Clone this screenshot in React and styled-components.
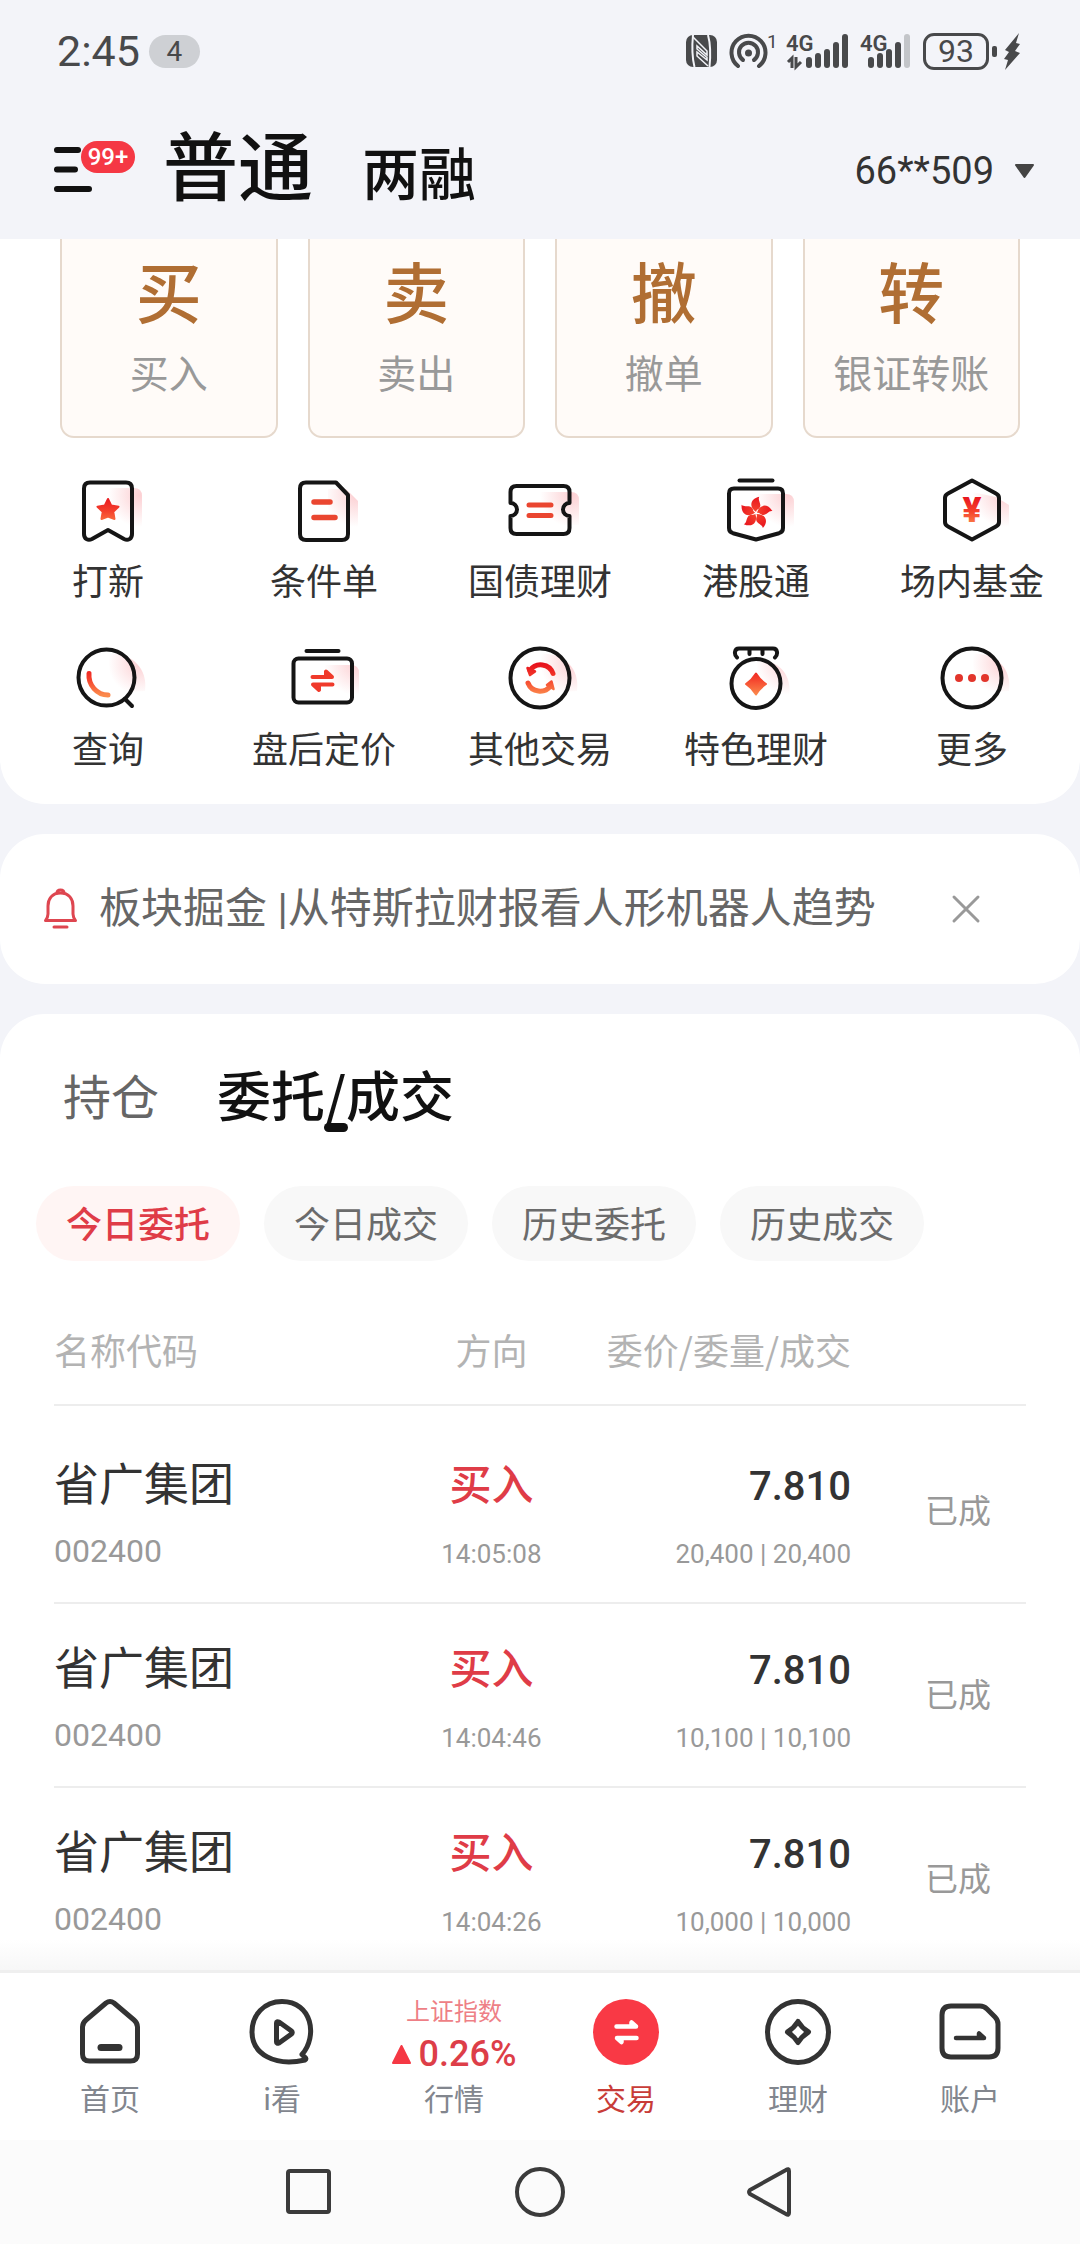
import React, { useState } from 'react';
import styled, { createGlobalStyle } from 'styled-components';

const GlobalStyle = createGlobalStyle`
  *,
  *::before,
  *::after {
    box-sizing: border-box;
  }

  body {
    margin: 0;
    background: #f3f4f9;
    color: #333333;
    font-family: 'Noto Sans CJK SC', sans-serif;
  }

  button {
    margin: 0;
    padding: 0;
    border: 0;
    background: none;
    color: inherit;
    font: inherit;
    cursor: pointer;
  }

  a {
    color: inherit;
    text-decoration: none;
  }

  svg {
    display: block;
    flex: none;
    overflow: visible;
  }
`;

const numeric = "Roboto, 'Noto Sans CJK SC', sans-serif";

const Page = styled.div`
  min-height: 100vh;
  display: flex;
  flex-direction: column;
`;

/* ---------- Top ---------- */

const Top = styled.header`
  position: sticky;
  top: 0;
  z-index: 2;
  background: #f3f4f9;
`;

const StatusBar = styled.div`
  display: flex;
  align-items: center;
  padding: 27px 60px 0 57px;
  color: #48494b;
  font-family: ${numeric};
`;

const Clock = styled.span`
  font-size: 43px;
  line-height: 48px;
`;

const Count = styled.span`
  width: 51px;
  margin-left: 9px;
  border-radius: 17px;
  background: #ced0d4;
  font-size: 28px;
  line-height: 33px;
  text-align: center;
`;

const StatusIcons = styled.div`
  display: flex;
  align-items: center;
  gap: 12px;
  margin-left: auto;
`;

const Battery = styled.span`
  position: relative;
  width: 66px;
  margin-right: 3px;
  border: 3px solid #48494b;
  border-radius: 11px;
  font-size: 32px;
  line-height: 31px;
  text-align: center;

  &::after {
    content: '';
    position: absolute;
    top: 10px;
    right: -11px;
    width: 5px;
    height: 11px;
    border-radius: 2px;
    background: #48494b;
  }
`;

const TitleBar = styled.div`
  display: flex;
  align-items: center;
  padding: 24px 46px 0 54px;
  height: 164px;
`;

const MenuButton = styled.button`
  position: relative;
  width: 82px;
`;

const Badge = styled.span`
  position: absolute;
  top: -6px;
  left: 27px;
  width: 54px;
  border-radius: 16px;
  background: #f53844;
  color: #ffffff;
  font-family: ${numeric};
  font-size: 24px;
  font-weight: 500;
  line-height: 32px;
`;

const Accounts = styled.nav`
  display: flex;
  align-items: baseline;
  gap: 49px;
  margin-left: 27px;
  padding-bottom: 5px;
  color: #111111;
  font-weight: 500;
`;

const AccountTab = styled.button`
  font-size: ${props => (props.$active ? '75px' : '57px')};
  line-height: 108px;
`;

const AccountPicker = styled.button`
  display: flex;
  align-items: center;
  gap: 21px;
  margin-left: auto;
  padding-top: 4px;
  font-family: ${numeric};
  font-size: 38px;
  line-height: 48px;
`;

/* ---------- Panels ---------- */

const Main = styled.main`
  flex: 1;
  display: flex;
  flex-direction: column;
  gap: 30px;
`;

const Panel = styled.section`
  border-radius: 45px;
  background: #ffffff;
`;

const TradePanel = styled(Panel)`
  border-top-left-radius: 0;
  border-top-right-radius: 0;
  padding-bottom: 30px;
`;

const ActionGrid = styled.div`
  display: grid;
  grid-template-columns: repeat(4, 1fr);
  gap: 30px;
  padding: 0 60px;
`;

const Action = styled.button`
  display: flex;
  flex-direction: column;
  align-items: center;
  padding: 10px 0 36px;
  border: 2px solid #e6d9cd;
  border-top: 0;
  border-radius: 0 0 14px 14px;
  background: #fffbf8;
`;

const ActionGlyph = styled.span`
  color: #b06e33;
  font-size: 66px;
  font-weight: 500;
  line-height: 80px;
`;

const ActionLabel = styled.span`
  margin-top: 14px;
  color: #999999;
  font-size: 39px;
  line-height: 57px;
`;

const ShortcutGrid = styled.div`
  display: grid;
  grid-template-columns: repeat(5, 1fr);
  row-gap: 37px;
  margin-top: 37px;
`;

const Shortcut = styled.a`
  display: flex;
  flex-direction: column;
  align-items: center;
  gap: 5px;
  font-size: 36px;
  line-height: 54px;
  white-space: nowrap;
`;

const Notice = styled(Panel)`
  display: flex;
  align-items: center;
  padding: 45px 100px 45px 43px;
`;

const NoticeText = styled.a`
  flex: 1;
  margin-left: 20px;
  color: #666666;
  font-family: ${numeric};
  font-size: 42px;
  line-height: 60px;
`;

const OrderPanel = styled(Panel)`
  flex: 1;
  padding-top: 40px;
  border-bottom-left-radius: 0;
  border-bottom-right-radius: 0;
`;

const Tabs = styled.div`
  display: flex;
  gap: 58px;
  padding: 0 63px;
`;

const Tab = styled.button`
  position: relative;
  color: ${props => (props.$active ? '#111111' : '#666666')};
  font-size: ${props => (props.$active ? '54px' : '48px')};
  font-weight: ${props => (props.$active ? 500 : 400)};
  line-height: 80px;
`;

const Underline = styled.span`
  position: absolute;
  bottom: 2px;
  left: 50%;
  width: 24px;
  height: 9px;
  margin-left: -12px;
  border-radius: 5px;
  background: #111111;
`;

const Chips = styled.div`
  display: flex;
  gap: 24px;
  margin-top: 52px;
  padding: 0 36px;
`;

const Chip = styled.button`
  padding: 0 30px 2px;
  border-radius: 38px;
  background: ${props => (props.$active ? '#fff5f4' : '#f8f8f8')};
  color: ${props => (props.$active ? '#df3c47' : '#6b6b6b')};
  font-size: 36px;
  font-weight: ${props => (props.$active ? 500 : 400)};
  line-height: 73px;
`;

/* ---------- Orders ---------- */

const TableWrap = styled.div`
  padding: 0 54px;
`;

const Table = styled.table`
  width: 100%;
  table-layout: fixed;
  border-collapse: separate;
  border-spacing: 0;

  tbody::before {
    content: '';
    display: block;
    height: 14px;
  }

  tbody tr:last-child td {
    border-bottom: 0;
  }
`;

const HeadCell = styled.th`
  width: ${props => props.$width};
  padding: 61px 0 28px;
  border-bottom: 2px solid #ededed;
  color: #b3b3b3;
  font-size: 36px;
  font-weight: 400;
  line-height: 54px;
  text-align: ${props => props.$align || 'left'};
  white-space: nowrap;
`;

const Cell = styled.td`
  padding: 32px 0 12px;
  border-bottom: 2px solid #ededed;
  text-align: ${props => props.$align || 'left'};
  vertical-align: top;
  white-space: nowrap;
`;

const StatusCell = styled.td`
  padding: 0 35px 4px 0;
  border-bottom: 2px solid #ededed;
  color: #999999;
  font-size: 33px;
  text-align: right;
  vertical-align: middle;
`;

const StockName = styled.div`
  font-size: 45px;
  line-height: 60px;
`;

const StockCode = styled.div`
  color: #999999;
  font-family: ${numeric};
  font-size: 32px;
  line-height: 78px;
`;

const Side = styled.div`
  color: #df3c47;
  font-size: 42px;
  font-weight: 500;
  line-height: 60px;
  margin-bottom: 10px;
`;

const Price = styled.div`
  font-family: ${numeric};
  font-size: 40px;
  font-weight: 500;
  line-height: 70px;
`;

const Detail = styled.div`
  color: #999999;
  font-family: ${numeric};
  font-size: 26px;
  line-height: 64px;
`;

/* ---------- Bottom ---------- */

const Bottom = styled.footer`
  position: sticky;
  bottom: 0;
  z-index: 2;
`;

const TabBar = styled.nav`
  position: relative;
  display: grid;
  grid-template-columns: repeat(6, 1fr);
  padding: 23px 24px 20px;
  border-top: 3px solid #efefef;
  background: #ffffff;

  &::before {
    content: '';
    position: absolute;
    left: 0;
    right: 0;
    bottom: 100%;
    height: 30px;
    margin-bottom: 3px;
    background: linear-gradient(rgba(247, 247, 247, 0), rgba(247, 247, 247, 1));
  }
`;

const TabItem = styled.a`
  display: flex;
  flex-direction: column;
  align-items: center;
  color: ${props => (props.$active ? '#c83c38' : '#82868e')};
  font-size: 30px;
  line-height: 45px;
`;

const TabIcon = styled.span`
  height: 79px;
  padding-top: 2px;
`;

const IndexQuote = styled.span`
  display: flex;
  flex-direction: column;
  align-items: center;
  height: 79px;
  color: #ee7f86;
  font-size: 24px;
  line-height: 28px;
`;

const IndexChange = styled.span`
  display: flex;
  align-items: center;
  gap: 8px;
  margin-top: 8px;
  color: #dd3e48;
  font-family: ${numeric};
  font-size: 36px;
  font-weight: 500;
  line-height: 44px;
`;

const SystemBar = styled.div`
  display: flex;
  justify-content: center;
  gap: 171px;
  padding: 22px 0;
  background: #fbfbfb;
`;

const SystemButton = styled.button`
  width: 60px;
  height: 60px;
`;

/* ---------- Icons ---------- */

const IconGradients = () => (
  <svg width="0" height="0" style={{ position: 'absolute' }} aria-hidden="true">
    <defs>
      <linearGradient id="flame" gradientUnits="userSpaceOnUse" x1="0" y1="20" x2="0" y2="52">
        <stop offset="0" stopColor="#e60f1c" />
        <stop offset="0.5" stopColor="#f5402c" />
        <stop offset="1" stopColor="#fb8a4c" />
      </linearGradient>
      <radialGradient id="glow" gradientUnits="userSpaceOnUse" cx="68" cy="20" r="32">
        <stop offset="0" stopColor="#f9a0a6" stopOpacity="0.5" />
        <stop offset="1" stopColor="#f9a0a6" stopOpacity="0" />
      </radialGradient>
    </defs>
  </svg>
);

const LineIcon = ({ glow, outline, children }) => (
  <svg width="72" height="72" viewBox="0 0 72 72" fill="none" strokeLinecap="round" strokeLinejoin="round" aria-hidden="true">
    <path d={glow} fill="url(#glow)" />
    <g stroke="#151515" strokeWidth="4">{outline}</g>
    {children}
  </svg>
);

const squareGlow = 'M30 13 H62 Q70 13 70 21 V56 H30 Z';
const roundGlow = 'M36 11 C58 9 76 24 73 48 L40 50 Z';

const BookmarkIcon = () => (
  <LineIcon
    glow={squareGlow}
    outline={<path d="M18 7.500 H54 Q60 7.500 60 13.500 V59 C60 64 56 66 52 64 L36 55 L20 64 C16 66 12 64 12 59 V13.500 Q12 7.500 18 7.500 Z" />}
  >
    <path
      d="M36 24 L39.300 30.600 L46.500 31.700 L41.300 36.800 L42.500 44 L36 41.500 L29.500 44 L30.700 36.800 L25.500 31.700 L32.700 30.600 Z"
      fill="url(#flame)"
      stroke="url(#flame)"
      strokeWidth="2"
    />
  </LineIcon>
);

const DocumentIcon = () => (
  <LineIcon
    glow="M40 14 H58 L70 26 V56 H40 Z"
    outline={<path d="M18 7.500 H48 L60 20 V59 Q60 65 54 65 H18 Q12 65 12 59 V13.500 Q12 7.500 18 7.500 Z" />}
  >
    <path d="M26 27 H42 M26 42.500 H47" stroke="#ea4630" strokeWidth="5.500" />
  </LineIcon>
);

const TicketIcon = () => (
  <LineIcon
    glow="M30 17 H67 Q75 17 75 25 V50 H30 Z"
    outline={<path d="M12.500 11 H59.500 Q65.500 11 65.500 17 V28 A6.500 6.500 0 0 0 65.500 41 V53 Q65.500 59 59.500 59 H12.500 Q6.500 59 6.500 53 V41 A6.500 6.500 0 0 0 6.500 28 V17 Q6.500 11 12.500 11 Z" />}
  >
    <path d="M25 30 H47 M25 40.500 H47" stroke="#ea4630" strokeWidth="5" />
  </LineIcon>
);

const PennantIcon = () => (
  <LineIcon
    glow="M34 19 H66 Q74 19 74 27 V54 H34 Z"
    outline={
      <>
        <path d="M19.500 5.500 H52.500" />
        <path d="M14 13.500 H58 Q63 13.500 63 18.500 V53 Q63 57 59 58.200 L36 64.500 L13 58.200 Q9 57 9 53 V18.500 Q9 13.500 14 13.500 Z" />
      </>
    }
  >
    {[0, 72, 144, 216, 288].map((angle) => (
      <path
        key={angle}
        transform={`rotate(${angle + 8} 36 38)`}
        d="M36 37 C28 33 28 25 37 21.500 C35.500 25 40.500 28 39 32 C38 34.500 36 34 36 37 Z"
        fill="url(#flame)"
      />
    ))}
  </LineIcon>
);

const YenText = styled.text`
  font-family: ${numeric};
  font-size: 35px;
  font-weight: 900;
`;

const HexagonIcon = () => (
  <LineIcon
    glow="M36 17 L60 22 L73 30 V62 L50 56 Z"
    outline={<path d="M36 5.500 L60 18.500 Q63 20 63 23 V47 Q63 50 60 51.500 L36 64.500 L12 51.500 Q9 50 9 47 V23 Q9 20 12 18.500 Z" />}
  >
    <YenText x="36" y="47" textAnchor="middle" fill="url(#flame)">¥</YenText>
  </LineIcon>
);

const SearchIcon = () => (
  <LineIcon
    glow={roundGlow}
    outline={
      <>
        <circle cx="34.500" cy="34.500" r="28" />
        <path d="M53 56 L60 63" />
      </>
    }
  >
    <path d="M17 30.500 C16 42 25 52 36 52" stroke="url(#flame)" strokeWidth="5" />
  </LineIcon>
);

const FolderSwapIcon = () => (
  <LineIcon
    glow="M30 22 H63 Q71 22 71 30 V52 H30 Z"
    outline={
      <>
        <path d="M18.500 8 H50.500" />
        <rect x="5.500" y="15.500" width="58.500" height="44" rx="5" />
      </>
    }
  >
    <path d="M24.500 34 H44 L38 28.500 V34" stroke="#f03a2b" strokeWidth="4" fill="#f03a2b" />
    <path d="M44.500 41.500 H25 L31 47 V41.500" stroke="#f03a2b" strokeWidth="4" fill="#f03a2b" />
  </LineIcon>
);

const RefreshIcon = () => (
  <LineIcon glow={roundGlow} outline={<circle cx="36" cy="35" r="29.500" />}>
    <path d="M26 27.500 A13 13 0 0 1 49 30.500 M24 40 A13 13 0 0 0 46.500 43" stroke="url(#flame)" strokeWidth="5" />
    <path d="M23.500 25 L26 32 L31 28.500 Z M49.500 46 L47.500 38.500 L43 42 Z" fill="url(#flame)" stroke="url(#flame)" strokeWidth="2.500" />
  </LineIcon>
);

const MedalIcon = () => (
  <LineIcon
    glow="M36 18 C56 15 73 30 69 54 L40 54 Z"
    outline={
      <>
        <path d="M17 14.500 C14 12 14 5.500 19 5.500 H53 C58 5.500 58 12 55 14.500 M29.500 5.500 V11 M42.500 5.500 V11" />
        <circle cx="36" cy="40.500" r="24.500" />
      </>
    }
  >
    <path d="M36 30.500 Q40 37 46 41 Q40 45 36 51.500 Q32 45 26 41 Q32 37 36 30.500 Z" fill="url(#flame)" stroke="url(#flame)" strokeWidth="2" />
  </LineIcon>
);

const MoreIcon = () => (
  <LineIcon glow={roundGlow} outline={<circle cx="36" cy="35" r="29.500" />}>
    <g fill="#e2352b">
      <circle cx="23" cy="35" r="4" />
      <circle cx="36" cy="35" r="4" />
      <circle cx="49" cy="35" r="4" />
    </g>
  </LineIcon>
);

const NfcIcon = () => (
  <svg width="31" height="32" viewBox="0 0 31 32" aria-hidden="true">
    <rect width="31" height="32" rx="7" fill="#48494b" />
    <path d="M7 0 C6 10 6 22 8.500 32" fill="none" stroke="#f3f4f9" strokeWidth="2" />
    <path d="M22 0 C24.500 9 24.500 22 23.500 32" fill="none" stroke="#f3f4f9" strokeWidth="2" />
    <path d="M7 2 L21 16 V20 L11 11 V14 L21 22.500 V25 L11 17 V21 L22 31" fill="none" stroke="#f3f4f9" strokeWidth="1.500" />
  </svg>
);

const SmallText = styled.text`
  font-family: ${numeric};
  font-size: ${props => props.$size};
  font-weight: ${props => props.$weight};
`;

const HotspotIcon = () => (
  <svg width="46" height="36" viewBox="0 0 46 36" fill="none" stroke="#48494b" strokeWidth="4" strokeLinecap="round" aria-hidden="true">
    <path d="M9 33 A17 17 0 1 1 30 33" />
    <path d="M14 27 A9.500 9.500 0 1 1 25 27" />
    <circle cx="19.500" cy="20" r="3.500" fill="#48494b" stroke="none" />
    <SmallText x="38" y="15" $size="19px" $weight="400" fill="#48494b" stroke="none">1</SmallText>
  </svg>
);

const barTops = [23, 19, 15, 8, 0];

const SignalIcon = ({ level, offset, data }) => (
  <svg width={offset + 43} height="34" viewBox={`0 0 ${offset + 43} 34`} fill="#48494b" aria-hidden="true">
    <SmallText x="-1" y="17" $size="22px" $weight="600">4G</SmallText>
    {data && (
      <path d="M1 28 L5 24 V34 M9 23 V33 L14 28" fill="none" stroke="#48494b" strokeWidth="3" />
    )}
    {barTops.map((top, i) => (
      <rect key={top} x={offset + i * 9} y={top} width="6" height={34 - top} rx="3" fill={i < level ? '#48494b' : '#c3c5c9'} />
    ))}
  </svg>
);

const BoltIcon = () => (
  <svg width="16" height="37" viewBox="0 0 16 37" fill="#48494b" aria-hidden="true">
    <path d="M15 0 L1 17 L5 19 L0 26 L4 27 L1 37 L16 20 L11 18 L16 11 L12 10 Z" />
  </svg>
);

const BellIcon = () => (
  <svg width="36" height="42" viewBox="0 0 36 42" fill="none" stroke="#de4650" strokeWidth="3" strokeLinecap="round" strokeLinejoin="round" aria-hidden="true">
    <path d="M14 5 Q14 2 17.500 2 Q21 2 21 5" />
    <path d="M17.500 5 C9 5 5 11 5 18 V26 Q5 29 2.500 32.500 H32.500 Q30 29 30 26 V18 C30 11 26 5 17.500 5 Z" />
    <path d="M11 39 H24" />
  </svg>
);

const tabStroke = {
  width: 68,
  height: 68,
  viewBox: '0 0 68 68',
  fill: 'none',
  stroke: '#333333',
  strokeWidth: 5,
  strokeLinecap: 'round',
  strokeLinejoin: 'round',
  'aria-hidden': true,
};

const HomeIcon = () => (
  <svg {...tabStroke}>
    <path d="M30 5 Q34 2 38 5 L58 22 Q61.500 25 61.500 29 V56 Q61.500 63 54.500 63 H13.500 Q6.500 63 6.500 56 V29 Q6.500 25 10 22 Z" />
    <path d="M25 49.500 H43" strokeWidth="7" />
  </svg>
);

const WatchIcon = () => (
  <svg {...tabStroke}>
    <path d="M54 56.500 C70 38 64 3.500 34 3.500 C16 3.500 4 17 4 34 C4 56 27 69 57 62 Q59 61 56.500 59 Z" />
    <path d="M28.500 25 Q28.500 23 31 24 L43.500 33 Q45 34.500 43.500 36 L31 45 Q28.500 46 28.500 44 Z" />
  </svg>
);

const TradeIcon = () => (
  <svg {...tabStroke} stroke="#ffffff">
    <circle cx="34" cy="34" r="33" fill="#f93945" stroke="none" />
    <path d="M24.500 28.500 H44 L39.500 24.500 V28.500" strokeWidth="4.500" fill="#ffffff" />
    <path d="M44.500 40 H25 L29.500 44 V40" strokeWidth="4.500" fill="#ffffff" />
  </svg>
);

const WealthIcon = () => (
  <svg {...tabStroke}>
    <circle cx="34" cy="34" r="30.500" />
    <path d="M34 23.500 Q38 30 44.500 34 Q38 38 34 44.500 Q30 38 23.500 34 Q30 30 34 23.500 Z" />
  </svg>
);

const ProfileIcon = () => (
  <svg {...tabStroke}>
    <path d="M15 8 H44 Q48 8 51 11 L59 19 Q62 22 62 26 V50 Q62 59 53 59 H15 Q6 59 6 50 V17 Q6 8 15 8 Z" />
    <path d="M20 40 H48 L43 35.500 V40" strokeWidth="4.500" />
  </svg>
);

/* ---------- Data ---------- */

const actions = [
  { glyph: '买', label: '买入' },
  { glyph: '卖', label: '卖出' },
  { glyph: '撤', label: '撤单' },
  { glyph: '转', label: '银证转账' },
];

const shortcuts = [
  { label: '打新', Icon: BookmarkIcon },
  { label: '条件单', Icon: DocumentIcon },
  { label: '国债理财', Icon: TicketIcon },
  { label: '港股通', Icon: PennantIcon },
  { label: '场内基金', Icon: HexagonIcon },
  { label: '查询', Icon: SearchIcon },
  { label: '盘后定价', Icon: FolderSwapIcon },
  { label: '其他交易', Icon: RefreshIcon },
  { label: '特色理财', Icon: MedalIcon },
  { label: '更多', Icon: MoreIcon },
];

const tabs = ['持仓', '委托/成交'];
const filters = ['今日委托', '今日成交', '历史委托', '历史成交'];

const orders = [
  { time: '14:05:08', volume: '20,400 | 20,400' },
  { time: '14:04:46', volume: '10,100 | 10,100' },
  { time: '14:04:26', volume: '10,000 | 10,000' },
];

const App = () => {
  const [tab, setTab] = useState('委托/成交');
  const [filter, setFilter] = useState('今日委托');
  const [showNotice, setShowNotice] = useState(true);

  return (
    <Page>
      <GlobalStyle />
      <IconGradients />

      <Top>
        <StatusBar>
          <Clock>2:45</Clock>
          <Count>4</Count>
          <StatusIcons>
            <NfcIcon />
            <HotspotIcon />
            <SignalIcon level={5} offset={19} data />
            <SignalIcon level={4} offset={7} />
            <Battery>93</Battery>
            <BoltIcon />
          </StatusIcons>
        </StatusBar>
        <TitleBar>
          <MenuButton aria-label="菜单">
            <svg width="38" height="45" viewBox="0 0 38 45" stroke="#111111" strokeWidth="6" strokeLinecap="round" aria-hidden="true">
              <path d="M3 3 H24 M3 22.500 H21 M3 42 H35" />
            </svg>
            <Badge>99+</Badge>
          </MenuButton>
          <Accounts>
            <AccountTab $active>普通</AccountTab>
            <AccountTab>两融</AccountTab>
          </Accounts>
          <AccountPicker>
            66**509
            <svg width="19" height="14" viewBox="0 0 19 14" fill="#444444" stroke="#444444" strokeWidth="2" strokeLinejoin="round" aria-hidden="true">
              <path d="M1 1 H18 L9.500 13 Z" />
            </svg>
          </AccountPicker>
        </TitleBar>
      </Top>

      <Main>
        <TradePanel>
          <ActionGrid>
            {actions.map(({ glyph, label }) => (
              <Action key={label}>
                <ActionGlyph>{glyph}</ActionGlyph>
                <ActionLabel>{label}</ActionLabel>
              </Action>
            ))}
          </ActionGrid>
          <ShortcutGrid>
            {shortcuts.map(({ label, Icon }) => (
              <Shortcut key={label} href="#">
                <Icon />
                {label}
              </Shortcut>
            ))}
          </ShortcutGrid>
        </TradePanel>

        {showNotice && (
          <Notice>
            <BellIcon />
            <NoticeText href="#">板块掘金 |从特斯拉财报看人形机器人趋势</NoticeText>
            <button aria-label="关闭" onClick={() => setShowNotice(false)}>
              <svg width="28" height="28" viewBox="0 0 28 28" stroke="#999999" strokeWidth="3" strokeLinecap="round" aria-hidden="true">
                <path d="M2 2 L26 26 M26 2 L2 26" />
              </svg>
            </button>
          </Notice>
        )}

        <OrderPanel>
          <Tabs>
            {tabs.map((name) => (
              <Tab key={name} $active={tab === name} onClick={() => setTab(name)}>
                {name}
                {tab === name && <Underline />}
              </Tab>
            ))}
          </Tabs>
          <Chips>
            {filters.map((name) => (
              <Chip key={name} $active={filter === name} onClick={() => setFilter(name)}>
                {name}
              </Chip>
            ))}
          </Chips>
          <TableWrap>
            <Table>
              <thead>
                <tr>
                  <HeadCell $width="34%">名称代码</HeadCell>
                  <HeadCell $width="22%" $align="center">方向</HeadCell>
                  <HeadCell $width="26%" $align="right">委价/委量/成交</HeadCell>
                  <HeadCell $width="18%" aria-label="状态" />
                </tr>
              </thead>
              <tbody>
                {orders.map(({ time, volume }) => (
                  <tr key={time}>
                    <Cell>
                      <StockName>省广集团</StockName>
                      <StockCode>002400</StockCode>
                    </Cell>
                    <Cell $align="center">
                      <Side>买入</Side>
                      <Detail>{time}</Detail>
                    </Cell>
                    <Cell $align="right">
                      <Price>7.810</Price>
                      <Detail>{volume}</Detail>
                    </Cell>
                    <StatusCell>已成</StatusCell>
                  </tr>
                ))}
              </tbody>
            </Table>
          </TableWrap>
        </OrderPanel>
      </Main>

      <Bottom>
        <TabBar>
          <TabItem href="#">
            <TabIcon><HomeIcon /></TabIcon>
            首页
          </TabItem>
          <TabItem href="#">
            <TabIcon><WatchIcon /></TabIcon>
            i看
          </TabItem>
          <TabItem href="#">
            <IndexQuote>
              上证指数
              <IndexChange>
                <svg width="19" height="19" viewBox="0 0 19 19" fill="#f53844" stroke="#f53844" strokeWidth="2" strokeLinejoin="round" aria-hidden="true">
                  <path d="M9.500 1 L18 18 H1 Z" />
                </svg>
                0.26%
              </IndexChange>
            </IndexQuote>
            行情
          </TabItem>
          <TabItem href="#" $active>
            <TabIcon><TradeIcon /></TabIcon>
            交易
          </TabItem>
          <TabItem href="#">
            <TabIcon><WealthIcon /></TabIcon>
            理财
          </TabItem>
          <TabItem href="#">
            <TabIcon><ProfileIcon /></TabIcon>
            账户
          </TabItem>
        </TabBar>
        <SystemBar>
          <SystemButton aria-label="最近任务">
            <svg width="60" height="60" viewBox="0 0 60 60" fill="none" stroke="#3b3b3b" strokeWidth="4" aria-hidden="true">
              <rect x="9" y="9" width="41" height="41" rx="2" />
            </svg>
          </SystemButton>
          <SystemButton aria-label="主屏幕">
            <svg width="60" height="60" viewBox="0 0 60 60" fill="none" stroke="#3b3b3b" strokeWidth="4" aria-hidden="true">
              <circle cx="30" cy="30" r="23" />
            </svg>
          </SystemButton>
          <SystemButton aria-label="返回">
            <svg width="60" height="60" viewBox="0 0 60 60" fill="none" stroke="#3b3b3b" strokeWidth="4" strokeLinejoin="round" aria-hidden="true">
              <path d="M48 9 Q48 6 45 8 L9 28 Q7 30 9 32 L45 52 Q48 54 48 51 Z" />
            </svg>
          </SystemButton>
        </SystemBar>
      </Bottom>
    </Page>
  );
};

export default App;
